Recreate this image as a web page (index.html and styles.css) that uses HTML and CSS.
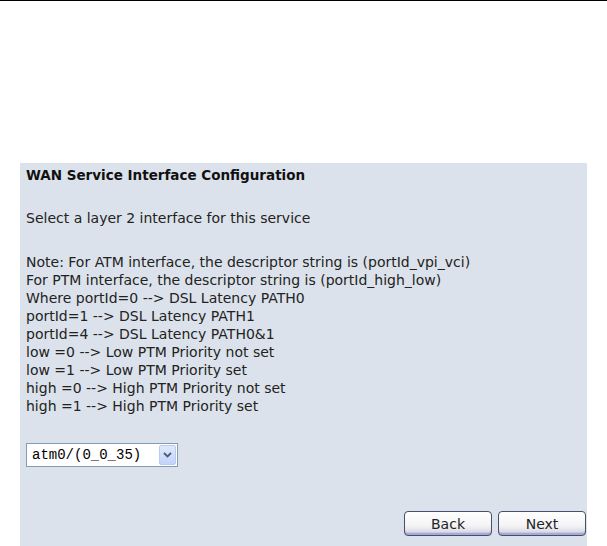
FILE: index.html
```html
<!DOCTYPE html>
<html>
<head>
<meta charset="utf-8">
<link rel="stylesheet" href="styles.css">
</head>
<body>
<div class="topline"></div>
<div class="panel">
  <div class="title">WAN Service Interface Configuration</div>
  <p class="intro">Select a layer 2 interface for this service</p>
  <div class="notes">
    <div>Note: For ATM interface, the descriptor string is (portId_vpi_vci)</div>
    <div>For PTM interface, the descriptor string is (portId_high_low)</div>
    <div>Where portId=0 --&gt; DSL Latency PATH0</div>
    <div>portId=1 --&gt; DSL Latency PATH1</div>
    <div>portId=4 --&gt; DSL Latency PATH0&amp;1</div>
    <div>low =0 --&gt; Low PTM Priority not set</div>
    <div>low =1 --&gt; Low PTM Priority set</div>
    <div>high =0 --&gt; High PTM Priority not set</div>
    <div>high =1 --&gt; High PTM Priority set</div>
  </div>
  <div class="selectbox">
    <span class="selval">atm0/(0_0_35)</span>
    <span class="selbtn"><svg width="9" height="6" viewBox="0 0 9 6"><path d="M1 1 L4.5 4.5 L8 1" fill="none" stroke="#4d5b73" stroke-width="1.8"/></svg></span>
  </div>
  <div class="buttons">
    <button class="btn">Back</button>
    <button class="btn">Next</button>
  </div>
</div>
</body>
</html>
```
FILE: styles.css
```css
html, body {
  margin: 0;
  padding: 0;
  background: #ffffff;
}
body {
  font-family: "DejaVu Sans", sans-serif;
  font-size: 14px;
  color: #222;
}
.topline {
  height: 1px;
  background: #000;
}
.panel {
  margin: 162px 20px 0 20px;
  background: #dce2eb;
  padding: 3px 1px 10px 6px;
  height: 383px;
  box-sizing: border-box;
  display: flex;
  flex-direction: column;
}
.title {
  font-weight: bold;
  font-size: 13.5px;
  line-height: 18px;
  color: #111;
}
.intro {
  margin: 25px 0 0 0;
  line-height: 18px;
}
.notes {
  margin-top: 26px;
  line-height: 18px;
}
.selectbox {
  margin-top: 28px;
  width: 152px;
  height: 24px;
  box-sizing: border-box;
  border: 1px solid #7f9db9;
  background: #fff;
  display: flex;
  align-items: center;
  justify-content: space-between;
  padding: 1px;
}
.selval {
  font-family: "Liberation Mono", monospace;
  font-size: 14px;
  padding-left: 4px;
  color: #000;
}
.selbtn {
  width: 17px;
  height: 20px;
  background: linear-gradient(#e0e9fb, #c1d3fb);
  border: 1px solid #b9cbf3;
  box-sizing: border-box;
  display: flex;
  align-items: center;
  justify-content: center;
  border-radius: 2px;
}
.buttons {
  margin-top: auto;
  display: flex;
  justify-content: flex-end;
  gap: 6px;
}
.btn {
  width: 88px;
  height: 25px;
  font-family: "DejaVu Sans", sans-serif;
  font-size: 14px;
  color: #222;
  border: 1px solid #45506a;
  border-radius: 4px;
  background: linear-gradient(#ffffff 0%, #f4f4f6 60%, #dcdce6 85%, #9da0d0 100%);
  box-shadow: inset 0 -2px 0 #a7a9d6;
  padding: 0;
}
```
